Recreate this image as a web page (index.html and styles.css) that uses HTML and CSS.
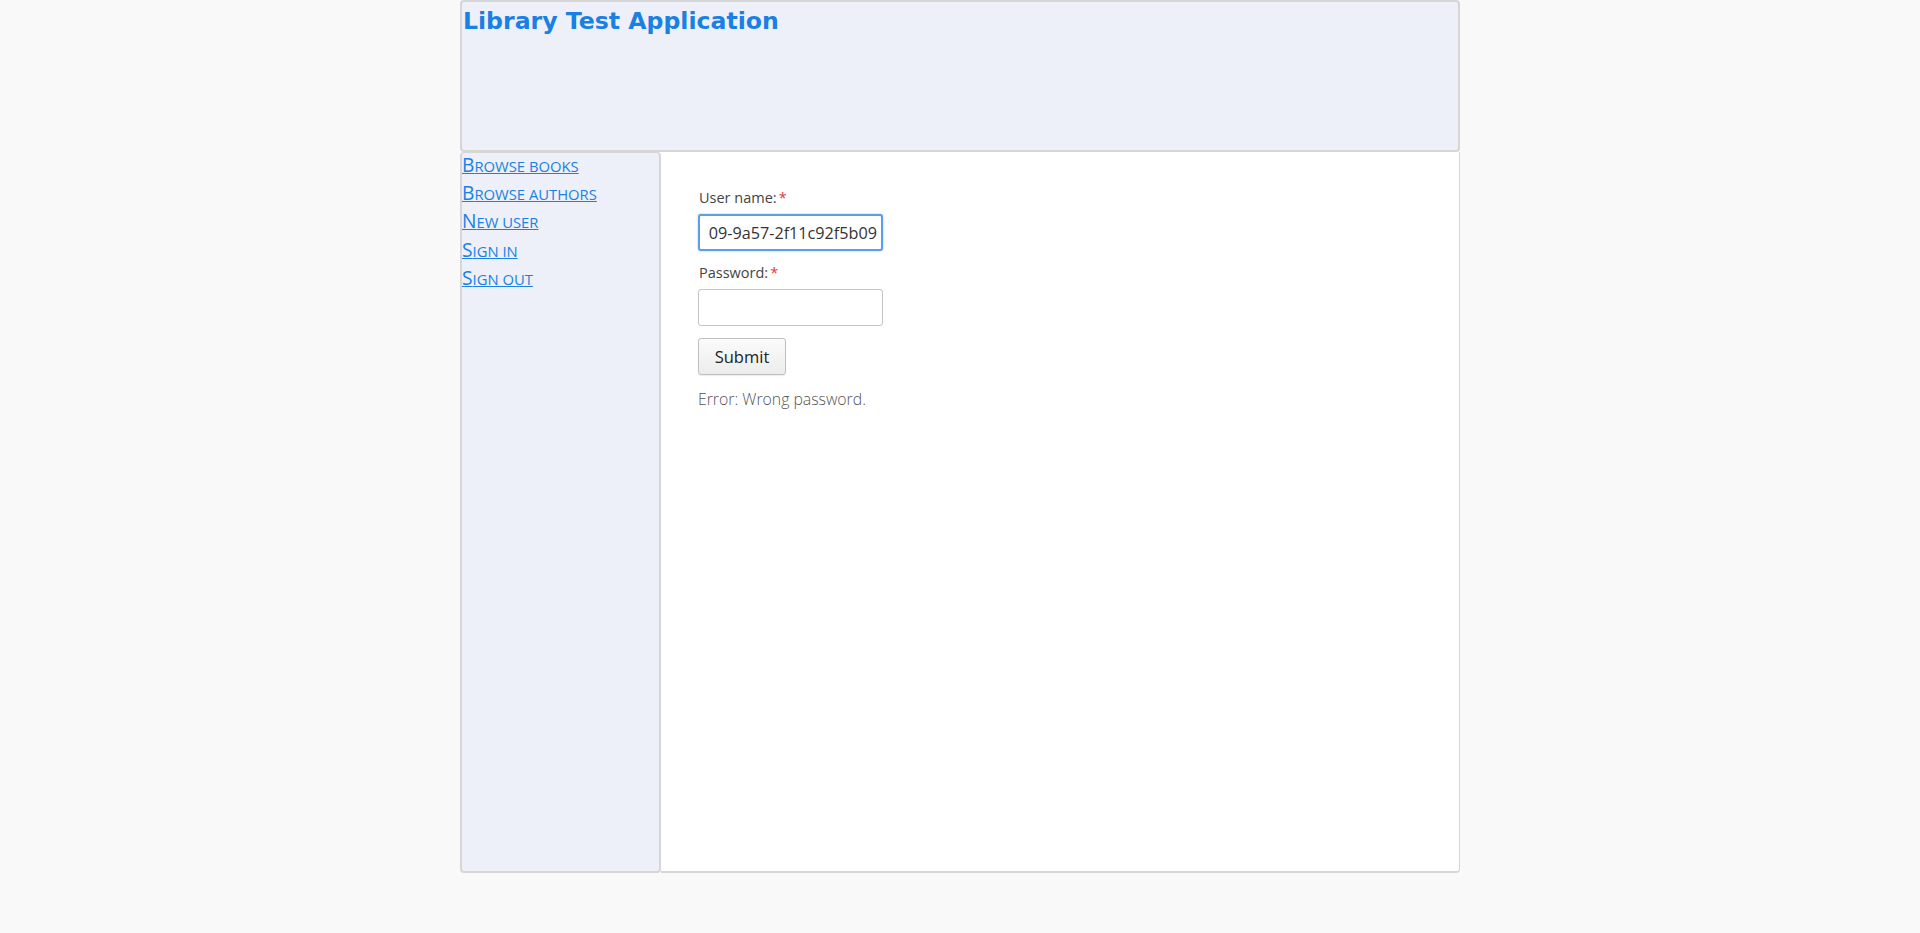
FILE: index.html
```html
<!DOCTYPE html>
<html>
<head>
<meta charset="utf-8">
<title>Library Test Application</title>
<link rel="stylesheet" href="styles.css">
</head>
<body>
<div class="page">
  <header class="header">
    <h1 class="title">Library Test Application</h1>
  </header>
  <div class="body-row">
    <nav class="sidebar">
      <a class="nav-link" href="#">Browse books</a>
      <a class="nav-link" href="#">Browse authors</a>
      <a class="nav-link" href="#">New user</a>
      <a class="nav-link" href="#">Sign in</a>
      <a class="nav-link" href="#">Sign out</a>
    </nav>
    <main class="content">
      <form class="form">
        <div class="field">
          <label class="label">User name:<span class="req">*</span></label>
          <input class="input focused" type="text" value="09-9a57-2f11c92f5b09">
        </div>
        <div class="field">
          <label class="label">Password:<span class="req">*</span></label>
          <input class="input" type="password" value="">
        </div>
        <button class="btn" type="button">Submit</button>
        <p class="error">Error: Wrong password.</p>
      </form>
    </main>
  </div>
</div>
</body>
</html>
```
FILE: styles.css
```css
html, body {
  margin: 0;
  padding: 0;
  background: #f9f9f9;
}
.page {
  width: 1000px;
  margin: 0 auto;
}
.header {
  height: 148px;
  background: #edf0f8;
  border: 2px solid #d6d6d6;
  border-radius: 4px;
}
.title {
  margin: 0;
  padding: 5px 0 0 1px;
  font-family: "DejaVu Sans", sans-serif;
  font-weight: bold;
  font-size: 23.6px;
  line-height: 28px;
  color: #1a80e3;
}
.body-row {
  display: flex;
  height: 721px;
}
.sidebar {
  width: 197px;
  background: #edf0f8;
  border: 2px solid #d6d6d6;
  border-top-width: 1px;
  border-radius: 4px;
  display: flex;
  flex-direction: column;
  align-items: flex-start;
  padding-top: 1px;
}
.nav-link {
  display: block;
  font-family: "Open Sans", sans-serif;
  text-transform: uppercase;
  font-size: 14.8px;
  line-height: 22px;
  height: 22px;
  margin-bottom: 6.2px;
  color: #1a80e3;
  text-decoration: underline;
}
.nav-link::first-letter {
  font-size: 19.2px;
  line-height: 22px;
}
.content {
  flex: 1;
  background: #fff;
  border-right: 1px solid #d6d6d6;
  border-bottom: 2px solid #d6d6d6;
  border-bottom-right-radius: 4px;
  padding: 36px 37px;
}
.form {
  display: flex;
  flex-direction: column;
  align-items: flex-start;
}
.field {
  display: flex;
  flex-direction: column;
  margin-bottom: 12px;
}
.label {
  font-family: "Open Sans", sans-serif;
  font-size: 14.5px;
  line-height: 19px;
  color: #444;
  margin-bottom: 7px;
  padding-left: 1px;
}
.req {
  color: #e53935;
  margin-left: 2px;
}
.input {
  box-sizing: border-box;
  width: 185px;
  height: 37px;
  border: 1px solid #c4c4c4;
  border-radius: 3px;
  padding: 0 9px;
  font-family: "Open Sans", sans-serif;
  font-size: 16.2px;
  color: #333;
  background: #fff;
  outline: none;
}
.input.focused {
  border: 2px solid #5e9ee6;
  box-shadow: 0 0 2px #8cbcf0;
  padding: 0 4px 0 6px;
  text-align: right;
}
.btn {
  box-sizing: border-box;
  width: 88px;
  height: 37px;
  border: 1px solid #c0c0c0;
  border-radius: 3px;
  background: linear-gradient(#fbfbfb, #ececec);
  font-family: "Open Sans", sans-serif;
  font-size: 16.5px;
  color: #222;
  box-shadow: 0 1px 1px rgba(0,0,0,0.08);
}
.error {
  margin: 13px 0 0 0;
  font-family: "Open Sans", sans-serif;
  font-weight: 300;
  font-size: 15.8px;
  line-height: 22px;
  color: #555;
}
```
